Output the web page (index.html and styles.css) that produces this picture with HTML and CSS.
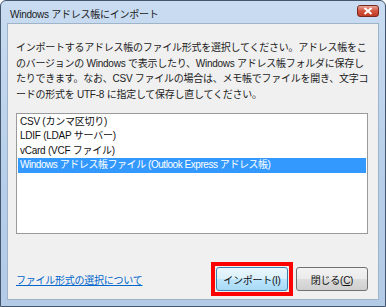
FILE: index.html
```html
<!DOCTYPE html>
<html lang="ja">
<head>
    <meta charset="UTF-8">
    <title>Windows アドレス帳にインポート</title>
    <link rel="stylesheet" href="styles.css">
</head>
<body>

<div class="window">
    <div class="titlebar">
        <span class="title">Windows アドレス帳にインポート</span>
        <span class="btn-close">
            <svg width="10" height="8" viewBox="0 0 10 8"><path d="M1.5 1 L8.5 7 M8.5 1 L1.5 7" stroke="#fff" stroke-width="2.2"/></svg>
        </span>
    </div>
    <div class="panel">
        <p class="desc">インポートするアドレス帳のファイル形式を選択してください。アドレス帳をこ<br>のバージョンの Windows で表示したり、Windows アドレス帳フォルダに保存し<br>たりできます。なお、CSV ファイルの場合は、メモ帳でファイルを開き、文字コ<br>ードの形式を UTF-8 に指定して保存し直してください。</p>
        <ul class="listbox">
            <li>CSV (カンマ区切り)</li>
            <li>LDIF (LDAP サーバー)</li>
            <li>vCard (VCF ファイル)</li>
            <li class="selected">Windows アドレス帳ファイル (Outlook Express アドレス帳)</li>
        </ul>
        <div class="footer">
            <a href="#" class="help-link">ファイル形式の選択について</a>
            <div class="buttons">
                <div class="mark"><button class="btn btn-default">インポート(I)</button></div>
                <button class="btn">閉じる(<u>C</u>)</button>
            </div>
        </div>
    </div>
</div>

</body>
</html>
```

FILE: styles.css
```css
body{
    margin:0;
    font-family: "Liberation Sans", "Noto Sans CJK JP", sans-serif;
    font-size:10px;
    letter-spacing:-0.25px;
    background:#fff;
}
.window{
    width:386px;
    height:307px;
    box-sizing: border-box;
    border:1px solid #44566e;
    border-radius:6px 6px 0 0;
    background: linear-gradient(#c9dcf1, #b6cee9 60%, #b3cbe7);
    display:flex;
    flex-direction: column;
    padding:0 6px 6px 6px;
}
.titlebar{
    height:22px;
    display:flex;
    align-items:center;
    justify-content: space-between;
    flex-shrink:0;
}
.title{
    margin-left:3px;
    margin-top:2px;
    color:#1a1a1a;
}
.btn-close{
    width:22px;
    height:12px;
    margin-top:-2px;
    border:1px solid #7a2a22;
    border-radius:3px;
    box-sizing: border-box;
    background: linear-gradient(#e9a597, #d2523d 50%, #c23a23);
    display:flex;
    align-items:center;
    justify-content:center;
}
.panel{
    flex:1;
    background:#f0f0f0;
    border:1px solid #9fb3c9;
    padding:0 10px 0 8px;
    display:flex;
    flex-direction: column;
}
.desc{
    margin:16px 0 0 0;
    line-height:15.5px;
    white-space:nowrap;
    color:#222;
}
.listbox{
    list-style:none;
    margin:11px 0 0 0;
    padding:1px 0 0 0;
    height:118px;
    background:#fff;
    border:1px solid #9a9a9a;
    color:#111;
}
.listbox li{
    line-height:14.4px;
    padding-left:2px;
    margin:0 1px;
    white-space:nowrap;
}
.listbox li.selected{
    background:#3399ff;
    color:#fff;
    letter-spacing:-0.45px;
}
.footer{
    margin-top:auto;
    margin-bottom:3px;
    display:flex;
    align-items:center;
    justify-content: space-between;
}
.help-link{
    color:#0066cc;
}
.buttons{
    display:flex;
    align-items:center;
    gap:3px;
}
.mark{
    border:4px solid #ff0000;
    padding:1px;
    height:34px;
    box-sizing: border-box;
    display:flex;
    align-items:center;
}
.btn{
    width:72px;
    height:24px;
    font-family: inherit;
    font-size:10px;
    letter-spacing:inherit;
    color:#111;
    border:1px solid #707070;
    border-radius:3px;
    background: linear-gradient(#f2f2f2, #ebebeb 50%, #dddddd 50%, #cfcfcf);
    padding:0;
}
.btn-default{
    border-color:#3c7fb1;
    background: linear-gradient(#eaf6fd, #d9f0fc 50%, #bee6fd 50%, #a7d9f5);
}
```
